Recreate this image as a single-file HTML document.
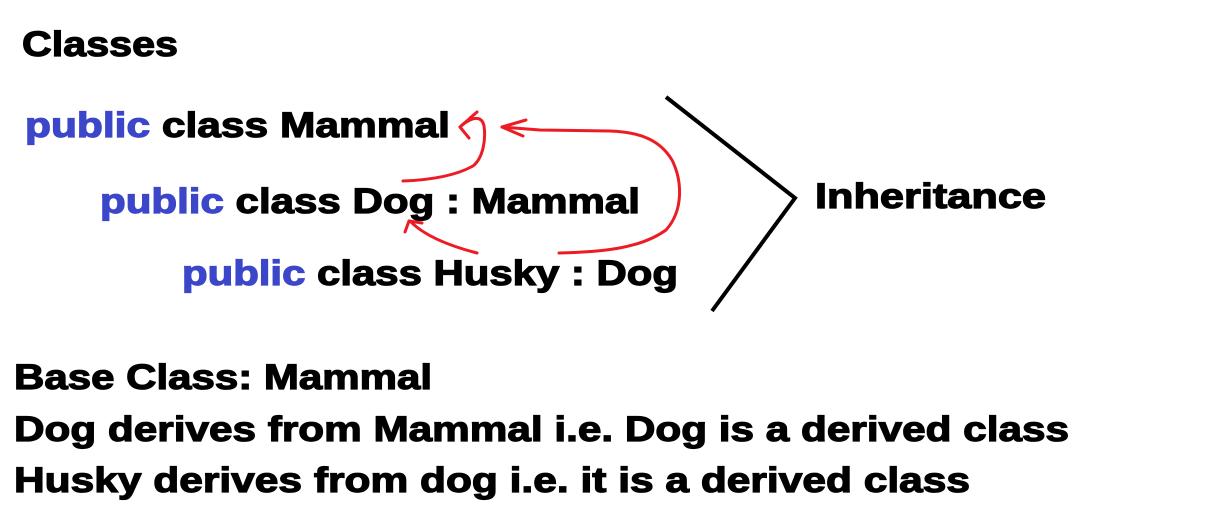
<!DOCTYPE html>
<html><head><style>
html,body{margin:0;padding:0;background:#fff;width:1212px;height:519px;overflow:hidden}
svg text{font-family:"Liberation Sans",Arial,sans-serif;font-weight:bold;font-size:35px;fill:#000;stroke:#000;stroke-width:1.2}
.b{fill:#3c46c8;stroke:#3c46c8}
</style></head><body>
<svg width="1212" height="519" viewBox="0 0 1212 519" xmlns="http://www.w3.org/2000/svg">
<text x="22" y="56" textLength="156" lengthAdjust="spacingAndGlyphs">Classes</text>
<text x="25" y="137" textLength="425" lengthAdjust="spacingAndGlyphs"><tspan class="b">public</tspan> class Mammal</text>
<text x="100" y="213" textLength="540" lengthAdjust="spacingAndGlyphs"><tspan class="b">public</tspan> class Dog : Mammal</text>
<text x="182" y="285" textLength="496" lengthAdjust="spacingAndGlyphs"><tspan class="b">public</tspan> class Husky : Dog</text>
<text x="815" y="208" textLength="231" lengthAdjust="spacingAndGlyphs">Inheritance</text>
<text x="14" y="389" textLength="418" lengthAdjust="spacingAndGlyphs">Base Class: Mammal</text>
<text x="14" y="441" textLength="1055" lengthAdjust="spacingAndGlyphs">Dog derives from Mammal i.e. Dog is a derived class</text>
<text x="14" y="492" textLength="956" lengthAdjust="spacingAndGlyphs">Husky derives from dog i.e. it is a derived class</text>
<polyline points="666,97 795,198 712,311" fill="none" stroke="#000" stroke-width="4"/>
<g fill="none" stroke="#ed1c24" stroke-width="3" stroke-linecap="round" stroke-linejoin="round">
<path d="M403,181 C430,180 455,176 473,166 C483,158 486,140 484,126 C482,116 474,116 462,125"/>
<path d="M460,127 L477,112 L470,118"/>
<path d="M460,127 L469,138"/>
<path d="M559,253 C600,252 640,249 666,230 C684,210 682,180 672,160 C660,140 640,132 610,131 L540,130 L502,127"/>
<path d="M502,127 L526,120"/>
<path d="M502,127 L523,136"/>
<path d="M477,253 C450,246 425,236 411,222"/>
<path d="M409,221 L405,232"/>
<path d="M409,221 L422,223"/>
</g>
</svg>
</body></html>
